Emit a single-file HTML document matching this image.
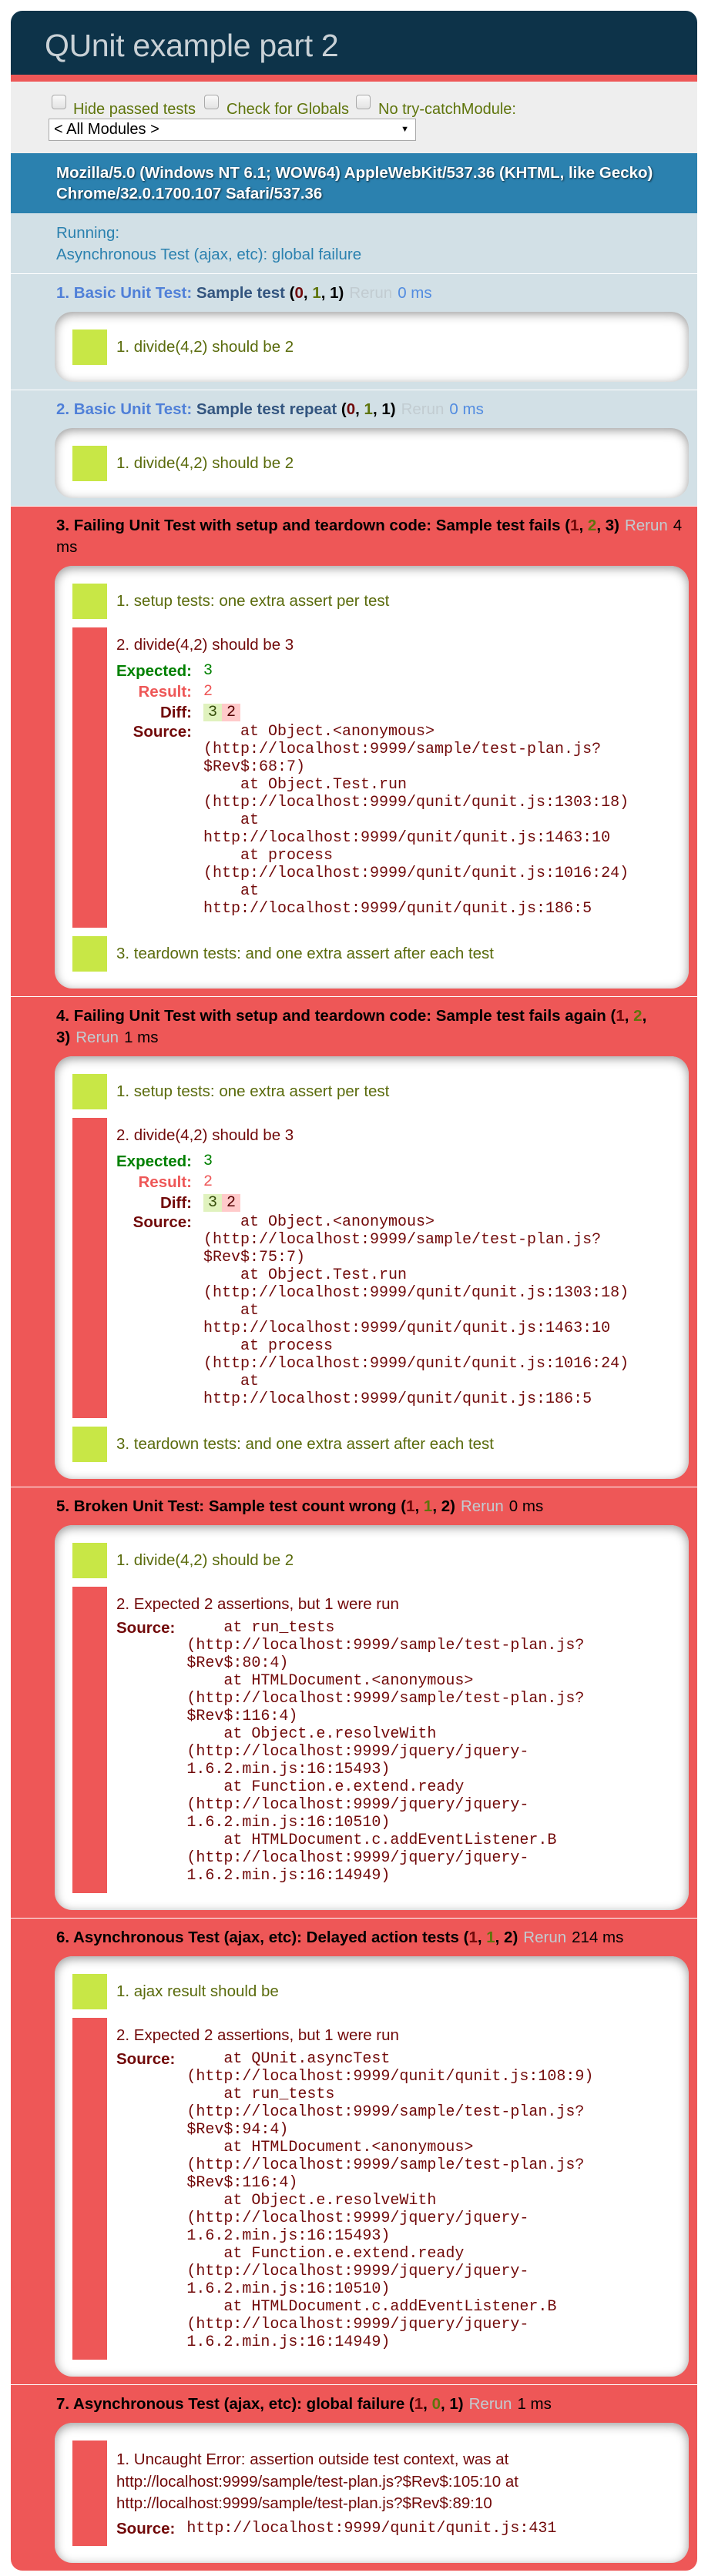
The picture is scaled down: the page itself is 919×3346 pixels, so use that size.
<!DOCTYPE html>
<html><head><meta charset="utf-8"><style>
*{box-sizing:border-box}
html,body{margin:0;padding:0;background:#fff}
body{width:919px;height:3346px;position:relative;font-family:"Liberation Sans",Arial,sans-serif;font-size:20px;overflow:hidden}
#wrap{position:absolute;left:14px;top:14px;width:891px}
#hdr{height:83px;background:#0d3349;border-radius:15px 15px 0 0;position:relative}
#hdr h1{position:absolute;left:44px;top:21px;margin:0;font-weight:normal;font-size:41px;line-height:48px;color:#c9d1d6;letter-spacing:-0.3px}
#banner{height:9px;background:#ee5757}
#tb{height:93px;background:#eee;position:relative}
.cb{position:absolute;top:17px;width:19px;height:19px;border:1px solid #a9a9a9;border-radius:4px;background:linear-gradient(#fafafa,#e3e3e3)}
.lbl{position:absolute;top:22px;color:#5e740b;font-size:20px;line-height:28px;white-space:nowrap}
#sel{position:absolute;left:49px;top:48px;width:477px;height:29px;border:1px solid #a9a9a9;background:#fff;font-size:20px;line-height:27px;padding-left:6px;color:#000}
#sel span{position:absolute;right:8px;top:0;font-size:11px}
#ua{height:78px;background:#2b81af;color:#fff;font-weight:bold;font-size:20.5px;letter-spacing:0;line-height:27px;padding:12px 0 0 59px;text-shadow:1px 1px 2px rgba(0,0,0,.7);white-space:nowrap}
#run{height:79px;background:#d2e0e6;color:#2b81af;line-height:28px;padding:12px 0 0 59px;border-bottom:1px solid #fff;font-size:20.5px}
.sec{padding:11px 0 10px;border-bottom:1px solid #fff}
.pass{background:#d2e0e6}
.fail{background:#ee5757}
.last{border-bottom:none;border-radius:0 0 15px 15px}
.h{margin-left:59px;line-height:28px;font-weight:bold;font-size:20.5px;letter-spacing:0;white-space:nowrap}
.pass .mn{color:#5080d8}.pass .tn{color:#33557f}
.fail .h{color:#000}
.rr{color:#c2ccd1;font-weight:normal;margin:0 7px}
.pass .ms{color:#528ce0;font-weight:normal}
.fail .ms{font-weight:normal}
.b0{color:#710909}.b1{color:#5e740b}.b2{color:#000}
.box{margin:10px 11px 0 57px;background:#fff;border-radius:23px;box-shadow:inset 0 3px 13px #999;padding:23px 0 22px 23px;list-style:none}
.box li{position:relative;padding-left:57px;margin-bottom:11px;font-size:20.5px}
.box li:last-child{margin-bottom:0}
.box li::before{content:"";position:absolute;left:0;top:0;width:45px;height:100%}
.box li.p::before{background:#c8e746}
.box li.f::before{background:#ee5757}
.p{color:#5a6b0c;line-height:28px;padding:9px 0;height:46px;white-space:nowrap}
.f{color:#710909;white-space:nowrap}
.f .t{line-height:28px;padding-top:9px}
table{border-spacing:0;border-collapse:collapse}
th{text-align:right;padding:0 15px 0 0;font-weight:bold;font-size:20.5px;vertical-align:top;line-height:27px;white-space:nowrap}
td{padding:0;vertical-align:top;line-height:27px}
pre{margin:0;font-family:"Liberation Mono","Courier New",monospace;font-size:20px;line-height:23px;color:#710909}
.mono{font-family:"Liberation Mono","Courier New",monospace;font-size:20px}
.exp{color:#008000}.act{color:#ee5757}
.del{background:#e0f2be;color:#374e0c;padding:0 6px}
.ins{background:#ffcaca;color:#500;padding:0 6px}
</style></head><body>
<div id="wrap">
<div id="hdr"><h1>QUnit example part 2</h1></div>
<div id="banner"></div>
<div id="tb">
<div class="cb" style="left:53px"></div><div class="lbl" style="left:81px">Hide passed tests</div>
<div class="cb" style="left:251px"></div><div class="lbl" style="left:280px">Check for Globals</div>
<div class="cb" style="left:448px"></div><div class="lbl" style="left:477px">No try-catchModule:</div>
<div id="sel">&lt; All Modules &gt;<span>▼</span></div>
</div>
<div id="ua">Mozilla/5.0 (Windows NT 6.1; WOW64) AppleWebKit/537.36 (KHTML, like Gecko)<br>Chrome/32.0.1700.107 Safari/537.36</div>
<div id="run">Running:<br>Asynchronous Test (ajax, etc): global failure</div>

<div class="sec pass">
<div class="h"><span class="mn">1. Basic Unit Test: </span><span class="tn">Sample test</span> <span class="b2">(<span class="b0">0</span>, <span class="b1">1</span>, 1)</span><span class="rr">Rerun</span><span class="ms">0 ms</span></div>
<ol class="box"><li class="p">1. divide(4,2) should be 2</li></ol>
</div>

<div class="sec pass">
<div class="h"><span class="mn">2. Basic Unit Test: </span><span class="tn">Sample test repeat</span> <span class="b2">(<span class="b0">0</span>, <span class="b1">1</span>, 1)</span><span class="rr">Rerun</span><span class="ms">0 ms</span></div>
<ol class="box"><li class="p">1. divide(4,2) should be 2</li></ol>
</div>

<div class="sec fail">
<div class="h">3. Failing Unit Test with setup and teardown code: Sample test fails (<span class="b0">1</span>, <span class="b1">2</span>, 3)<span class="rr">Rerun</span><span class="ms">4</span><br><span class="ms">ms</span></div>
<ol class="box">
<li class="p">1. setup tests: one extra assert per test</li>
<li class="f" style="height:390px"><div class="t">2. divide(4,2) should be 3</div>
<table style="margin-top:6px">
<tr><th style="color:#008000">Expected:</th><td class="mono exp">3</td></tr>
<tr><th style="color:#ee5757">Result:</th><td class="mono act">2</td></tr>
<tr><th>Diff:</th><td class="mono"><span class="del">3</span><span class="ins">2</span></td></tr>
<tr><th style="line-height:23px">Source:</th><td><pre>    at Object.&lt;anonymous&gt;
(http://localhost:9999/sample/test-plan.js?
$Rev$:68:7)
    at Object.Test.run
(http://localhost:9999/qunit/qunit.js:1303:18)
    at
http://localhost:9999/qunit/qunit.js:1463:10
    at process
(http://localhost:9999/qunit/qunit.js:1016:24)
    at
http://localhost:9999/qunit/qunit.js:186:5</pre></td></tr>
</table></li>
<li class="p">3. teardown tests: and one extra assert after each test</li>
</ol>
</div>

<div class="sec fail">
<div class="h">4. Failing Unit Test with setup and teardown code: Sample test fails again (<span class="b0">1</span>, <span class="b1">2</span>,<br>3)<span class="rr">Rerun</span><span class="ms">1 ms</span></div>
<ol class="box">
<li class="p">1. setup tests: one extra assert per test</li>
<li class="f" style="height:390px"><div class="t">2. divide(4,2) should be 3</div>
<table style="margin-top:6px">
<tr><th style="color:#008000">Expected:</th><td class="mono exp">3</td></tr>
<tr><th style="color:#ee5757">Result:</th><td class="mono act">2</td></tr>
<tr><th>Diff:</th><td class="mono"><span class="del">3</span><span class="ins">2</span></td></tr>
<tr><th style="line-height:23px">Source:</th><td><pre>    at Object.&lt;anonymous&gt;
(http://localhost:9999/sample/test-plan.js?
$Rev$:75:7)
    at Object.Test.run
(http://localhost:9999/qunit/qunit.js:1303:18)
    at
http://localhost:9999/qunit/qunit.js:1463:10
    at process
(http://localhost:9999/qunit/qunit.js:1016:24)
    at
http://localhost:9999/qunit/qunit.js:186:5</pre></td></tr>
</table></li>
<li class="p">3. teardown tests: and one extra assert after each test</li>
</ol>
</div>

<div class="sec fail">
<div class="h">5. Broken Unit Test: Sample test count wrong (<span class="b0">1</span>, <span class="b1">1</span>, 2)<span class="rr">Rerun</span><span class="ms">0 ms</span></div>
<ol class="box">
<li class="p">1. divide(4,2) should be 2</li>
<li class="f" style="height:398px"><div class="t">2. Expected 2 assertions, but 1 were run</div>
<table style="margin-top:5px">
<tr><th style="line-height:23px">Source:</th><td><pre>    at run_tests
(http://localhost:9999/sample/test-plan.js?
$Rev$:80:4)
    at HTMLDocument.&lt;anonymous&gt;
(http://localhost:9999/sample/test-plan.js?
$Rev$:116:4)
    at Object.e.resolveWith
(http://localhost:9999/jquery/jquery-
1.6.2.min.js:16:15493)
    at Function.e.extend.ready
(http://localhost:9999/jquery/jquery-
1.6.2.min.js:16:10510)
    at HTMLDocument.c.addEventListener.B
(http://localhost:9999/jquery/jquery-
1.6.2.min.js:16:14949)</pre></td></tr>
</table></li>
</ol>
</div>

<div class="sec fail">
<div class="h">6. Asynchronous Test (ajax, etc): Delayed action tests (<span class="b0">1</span>, <span class="b1">1</span>, 2)<span class="rr">Rerun</span><span class="ms">214 ms</span></div>
<ol class="box">
<li class="p">1. ajax result should be</li>
<li class="f" style="height:444px"><div class="t">2. Expected 2 assertions, but 1 were run</div>
<table style="margin-top:5px">
<tr><th style="line-height:23px">Source:</th><td><pre>    at QUnit.asyncTest
(http://localhost:9999/qunit/qunit.js:108:9)
    at run_tests
(http://localhost:9999/sample/test-plan.js?
$Rev$:94:4)
    at HTMLDocument.&lt;anonymous&gt;
(http://localhost:9999/sample/test-plan.js?
$Rev$:116:4)
    at Object.e.resolveWith
(http://localhost:9999/jquery/jquery-
1.6.2.min.js:16:15493)
    at Function.e.extend.ready
(http://localhost:9999/jquery/jquery-
1.6.2.min.js:16:10510)
    at HTMLDocument.c.addEventListener.B
(http://localhost:9999/jquery/jquery-
1.6.2.min.js:16:14949)</pre></td></tr>
</table></li>
</ol>
</div>

<div class="sec fail last">
<div class="h">7. Asynchronous Test (ajax, etc): global failure (<span class="b0">1</span>, <span class="b1">0</span>, 1)<span class="rr">Rerun</span><span class="ms">1 ms</span></div>
<ol class="box">
<li class="f" style="height:137px"><div style="line-height:28.5px;padding-top:11px">1. Uncaught Error: assertion outside test context, was at<br>http://localhost:9999/sample/test-plan.js?$Rev$:105:10 at<br>http://localhost:9999/sample/test-plan.js?$Rev$:89:10</div>
<table style="margin-top:3px">
<tr><th style="line-height:30px">Source:</th><td style="line-height:30px"><pre style="line-height:30px">http://localhost:9999/qunit/qunit.js:431</pre></td></tr>
</table></li>
</ol>
</div>
</div>
</body></html>
